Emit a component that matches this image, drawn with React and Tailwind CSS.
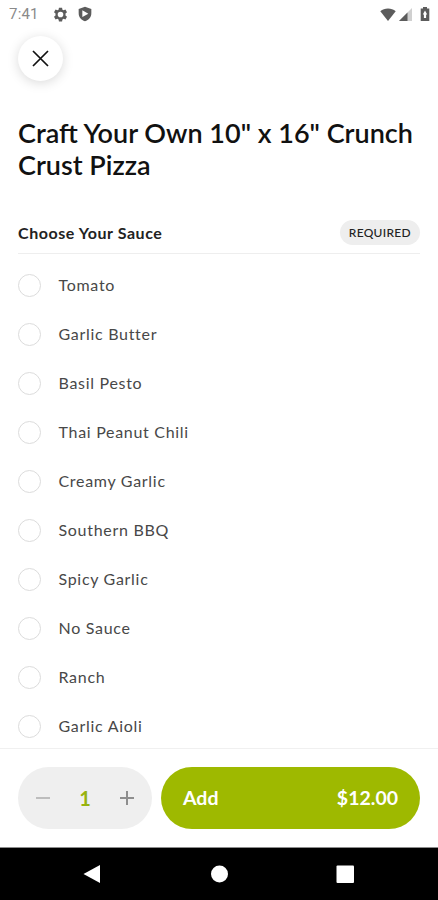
import React, { useState } from "react";

const SAUCES = [
  "Tomato",
  "Garlic Butter",
  "Basil Pesto",
  "Thai Peanut Chili",
  "Creamy Garlic",
  "Southern BBQ",
  "Spicy Garlic",
  "No Sauce",
  "Ranch",
  "Garlic Aioli",
];

const PRICE = 12;

function StatusBar() {
  return (
    <div className="h-[28px] shrink-0 flex items-center justify-between pl-[9px] pr-[8px] text-[#5c5c5c]">
      <div className="flex items-center">
        <span className="w-[44px] pt-px font-['Roboto',sans-serif] text-[15px] leading-none tracking-[0.2px] text-[#8a8a8a]">7:41</span>
        <svg className="w-[15px] h-[15px]" viewBox="0 0 24 24" fill="currentColor">
          <path
            fillRule="evenodd"
            d="M9.5 1h5l.6 3.200 1.800 1 3-1.100 2.500 4.300-2.400 2.100v3l2.400 2.100-2.500 4.300-3-1.100-1.800 1-.6 3.200h-5l-.6-3.200-1.800-1-3 1.100-2.500-4.300L4 13.500v-3L1.600 8.400l2.500-4.300 3 1.100 1.800-1zM12 7.500a4.500 4.500 0 1 0 0 9 4.500 4.500 0 0 0 0-9z"
          />
        </svg>
        <svg className="w-[16px] h-[16px] ml-[9px]" viewBox="0 0 24 24" fill="currentColor">
          <path
            fillRule="evenodd"
            d="M12 1l9.500 3.500V11c0 5.700-3.800 10.300-9.500 12-5.700-1.700-9.500-6.300-9.500-12V4.500zM8 6.500v10l9-5z"
          />
        </svg>
      </div>
      <div className="flex items-center">
        <svg className="w-[16px] h-[13px]" viewBox="0 0 16 13" fill="currentColor">
          <path d="M8 13L0.300 3.300C2.500 1.500 5 .5 8 .5s5.500 1 7.700 2.800z" />
        </svg>
        <svg className="w-[13px] h-[13px] ml-[3px]" viewBox="0 0 13 13">
          <path d="M13 0v13H0z" fill="#d0d0d0" />
          <path d="M8.500 4.500V13H0z" fill="currentColor" />
        </svg>
        <svg className="w-[10px] h-[14px] ml-[8px]" viewBox="0 0 10 14" fill="currentColor">
          <path fillRule="evenodd" d="M3 0h4v1.500h2.300V14H.7V1.500H3zM5 3.500L2.800 7.500h1.100V11h2.200V7.500h1.100z" />
        </svg>
      </div>
    </div>
  );
}

function SauceOption({ name, selected, onSelect }) {
  return (
    <button onClick={onSelect} className="h-[49px] shrink-0 flex items-center text-left">
      <span className="size-[23px] rounded-full border border-[#dcdcdc] flex items-center justify-center">
        {selected && <span className="size-3 rounded-full bg-[#9eb900]" />}
      </span>
      <span className="ml-[17.5px] pb-px text-[16px] leading-5 tracking-[0.7px] text-[#484848]">{name}</span>
    </button>
  );
}

function NavBar() {
  return (
    <div className="h-[53px] shrink-0 bg-black border-t border-[#8c8c8c] flex items-center justify-center">
      <svg className="w-[272px] h-[20px]" viewBox="0 0 272 20" fill="white">
        <path d="M0.500 10L17 1v18z" />
        <circle cx="136.500" cy="10" r="8.500" />
        <rect x="253.500" y="1.500" width="17.500" height="17.500" rx="1" />
      </svg>
    </div>
  );
}

export default function App() {
  const [sauce, setSauce] = useState(null);
  const [quantity, setQuantity] = useState(1);

  return (
    <div className="w-full h-screen overflow-hidden flex flex-col bg-white font-['Lato',sans-serif]">
      <StatusBar />

      <div className="flex-1 min-h-0 overflow-hidden flex flex-col px-[18px] pt-[8px]">
        <button className="size-[45px] shrink-0 rounded-full bg-white shadow-[0_2px_12px_rgba(0,0,0,0.15)] flex items-center justify-center">
          <svg className="size-[17px]" viewBox="0 0 17 17" fill="none" stroke="#111" strokeWidth="1.700">
            <path d="M1 1l15 15M16 1L1 16" />
          </svg>
        </button>

        <h1 className="mt-[36px] -mr-2 shrink-0 text-[27px] leading-[32px] font-semibold text-[#111]">
          Craft Your Own 10" x 16" Crunch Crust Pizza
        </h1>

        <div className="mt-[39px] pb-[7.5px] shrink-0 flex items-center justify-between border-b border-[#eeeeee]">
          <h2 className="text-[16px] leading-5 font-bold tracking-[0.550px] text-[#222]">Choose Your Sauce</h2>
          <span className="h-[25px] px-[9px] rounded-full bg-[#eee] flex items-center text-[12px] font-medium tracking-[0.3px] text-[#222]">
            REQUIRED
          </span>
        </div>

        <div className="mt-[7.5px] flex flex-col">
          {SAUCES.map((name) => (
            <SauceOption key={name} name={name} selected={sauce === name} onSelect={() => setSauce(name)} />
          ))}
        </div>
      </div>

      <div className="h-[99px] shrink-0 flex items-center gap-[9px] px-[18px] border-t border-[#f0f0f0]">
        <div className="w-[134px] h-[62px] rounded-full bg-[#efefef] flex items-center justify-between px-[18px]">
          <button onClick={() => setQuantity(Math.max(1, quantity - 1))}>
            <svg className="size-[14px]" viewBox="0 0 14 14" stroke="#bdbdbd" strokeWidth="2">
              <path d="M0 7h14" />
            </svg>
          </button>
          <span className="text-[20px] font-bold text-[#97b30f]">{quantity}</span>
          <button onClick={() => setQuantity(quantity + 1)}>
            <svg className="size-[14px]" viewBox="0 0 14 14" stroke="#8e8e8e" strokeWidth="2">
              <path d="M0 7h14M7 0v14" />
            </svg>
          </button>
        </div>
        <button className="flex-1 h-[62px] rounded-full bg-[#9eb900] flex items-center justify-between px-[22px] text-[19.500px] font-bold text-white">
          <span>Add</span>
          <span>${(PRICE * quantity).toFixed(2)}</span>
        </button>
      </div>

      <NavBar />
    </div>
  );
}
